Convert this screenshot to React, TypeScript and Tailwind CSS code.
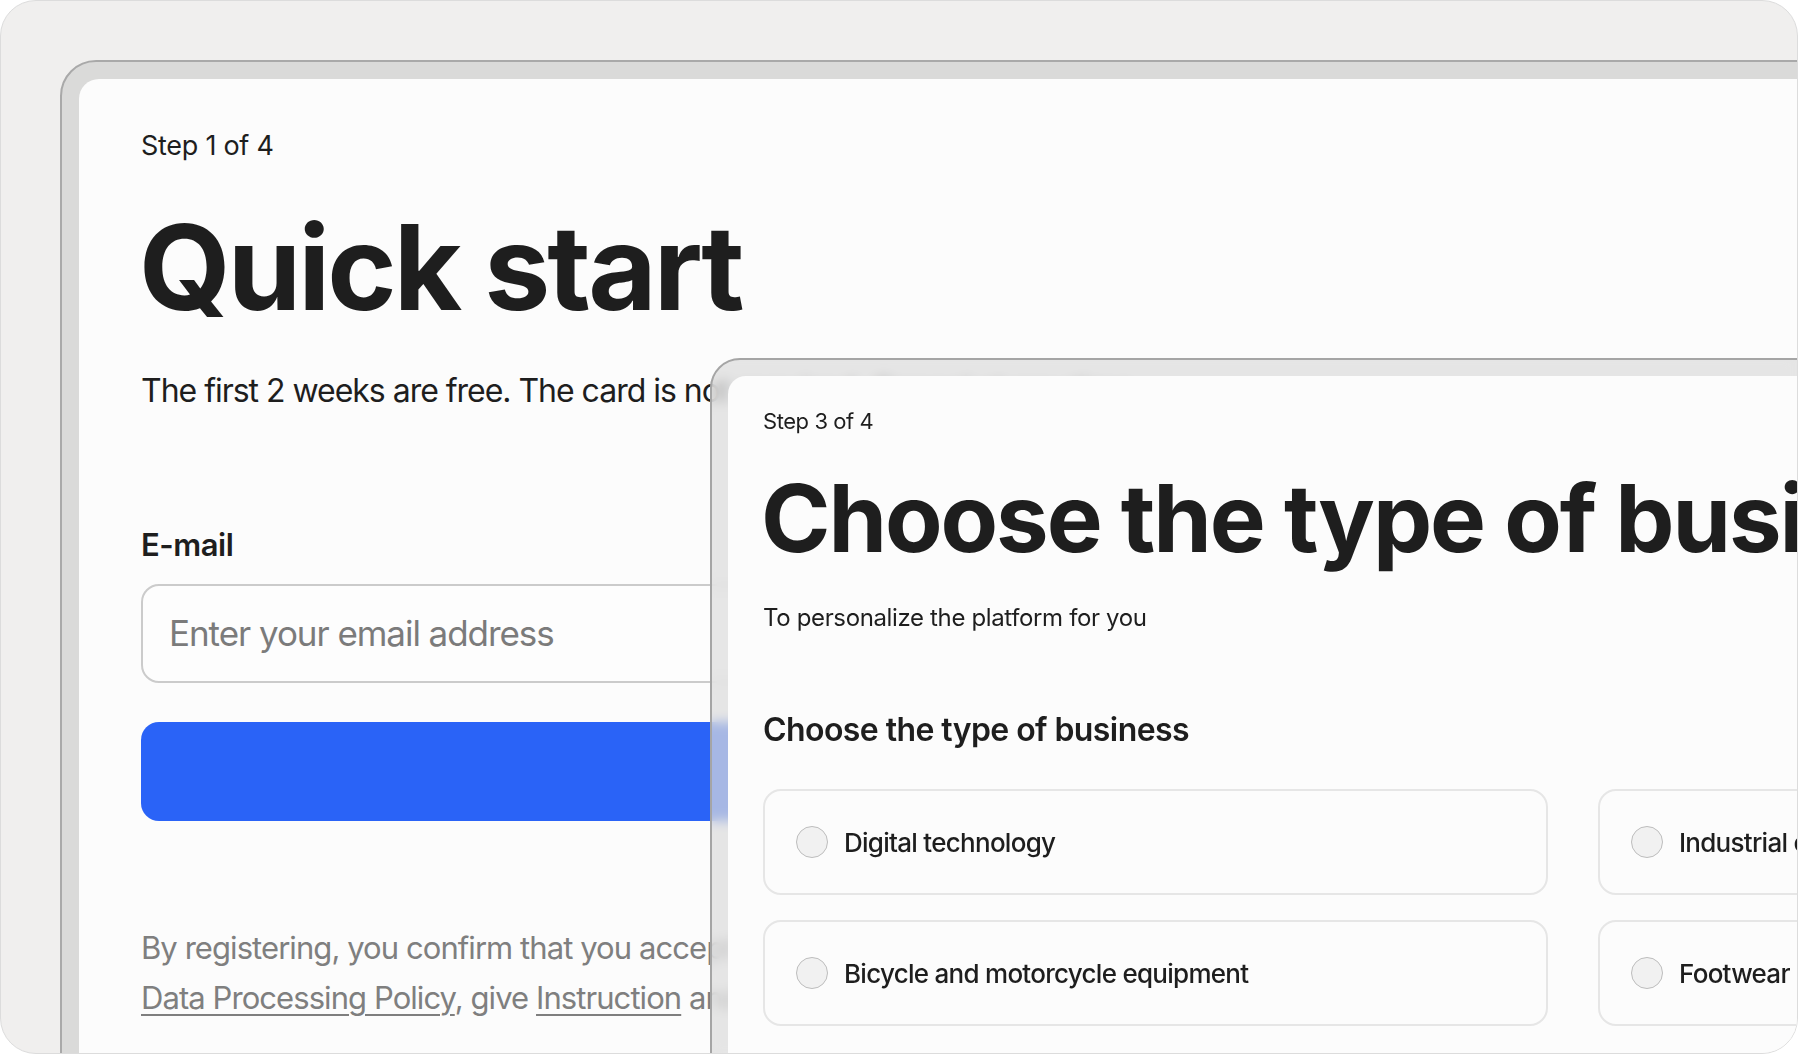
const options = [
  "Digital technology",
  "Industrial equipment",
  "Bicycle and motorcycle equipment",
  "Footwear",
];

function Radio() {
  return <span className="h-8 w-8 shrink-0 rounded-full border-[1.5px] border-[#bdbdbd] bg-[#f1f1f1]" />;
}

function QuickStart() {
  return (
    <div className="h-[1100px] w-[1800px] shrink-0 rounded-[36px] border-2 border-[#a9a9a9] bg-[#dadad9] p-[17px]">
      <div className="h-full rounded-[20px] bg-[#fcfcfc] pl-[62px] pt-[51px]">
        <p className="text-[27px] leading-[1.2] tracking-[-0.01em]">Step 1 of 4</p>
        <h1 className="mt-[35px] -ml-[2px] text-[118px] font-bold leading-[1.2] tracking-[-0.025em]">Quick start</h1>
        <p className="mt-[33px] text-[32px] leading-[1.2] tracking-[-0.032em]">
          The first 2 weeks are free. The card is not required. Cancel at any time.
        </p>
        <div className="w-[1150px]">
          <label className="mt-[116px] block text-[31px] font-semibold leading-[1.2] tracking-[-0.015em]">E-mail</label>
          <input
            className="mt-[20px] block h-[99px] w-full rounded-[18px] border-2 border-[#cbcbcb] bg-[#fdfdfd] px-[26px] text-[35px] tracking-[-0.03em] outline-none placeholder:text-[#7b7b7b]"
            placeholder="Enter your email address"
          />
          <button className="mt-[39px] block h-[99px] w-full rounded-[18px] bg-[#2a63f7] text-[32px] font-semibold text-white">
          </button>
        </div>
        <p className="mt-[102px] w-[1200px] text-[31px] leading-[50px] tracking-[-0.03em] text-[#7f7f7f]">
          By registering, you confirm that you accept the Terms of Service and
          <br />
          <span className="underline decoration-[1.5px] underline-offset-[5px]">Data Processing Policy</span>, give{" "}
          <span className="underline decoration-[1.5px] underline-offset-[5px]">Instruction</span> and consent to receive messages
        </p>
      </div>
    </div>
  );
}

function BusinessType() {
  return (
    <div className="absolute left-[709px] top-[357px] h-[800px] w-[1200px] rounded-[30px] border-2 border-[#a5a5a5] bg-[#dcdcdc]/70 p-[16px] backdrop-blur-[6px]">
      <div className="h-full rounded-[18px] bg-[#fcfcfc] pl-[35px] pt-[32px]">
        <p className="text-[22px] leading-[1.2] tracking-[-0.02em]">Step 3 of 4</p>
        <h2 className="mt-[28px] -ml-[2px] whitespace-nowrap text-[94px] font-bold leading-[1.2] tracking-[-0.022em]">
          Choose the type of business
        </h2>
        <p className="mt-[29px] text-[24px] leading-[1.2] tracking-[-0.015em]">To personalize the platform for you</p>
        <h3 className="mt-[78px] text-[32px] font-semibold leading-[1.2] tracking-[-0.018em]">Choose the type of business</h3>
        <div className="mt-[40px] grid grid-cols-[785px_785px] gap-x-[50px] gap-y-[25px]">
          {options.map((o) => (
            <div
              key={o}
              className="flex h-[106px] items-center gap-4 rounded-[18px] border-2 border-[#e6e6e6] bg-[#fcfcfc] pl-[31px]"
            >
              <Radio />
              <span className="whitespace-nowrap text-[26px] font-medium tracking-[-0.028em]">{o}</span>
            </div>
          ))}
        </div>
      </div>
    </div>
  );
}

export default function App() {
  return (
    <div className="h-[1054px] w-[1798px] bg-white font-['Inter','Liberation_Sans',sans-serif] text-[#1e1e1e]">
      <div className="relative flex h-full overflow-hidden rounded-[36px] border border-[#dcdcdc] bg-[#f0efee] pl-[59px] pt-[59px]">
        <QuickStart />
        <BusinessType />
      </div>
    </div>
  );
}
